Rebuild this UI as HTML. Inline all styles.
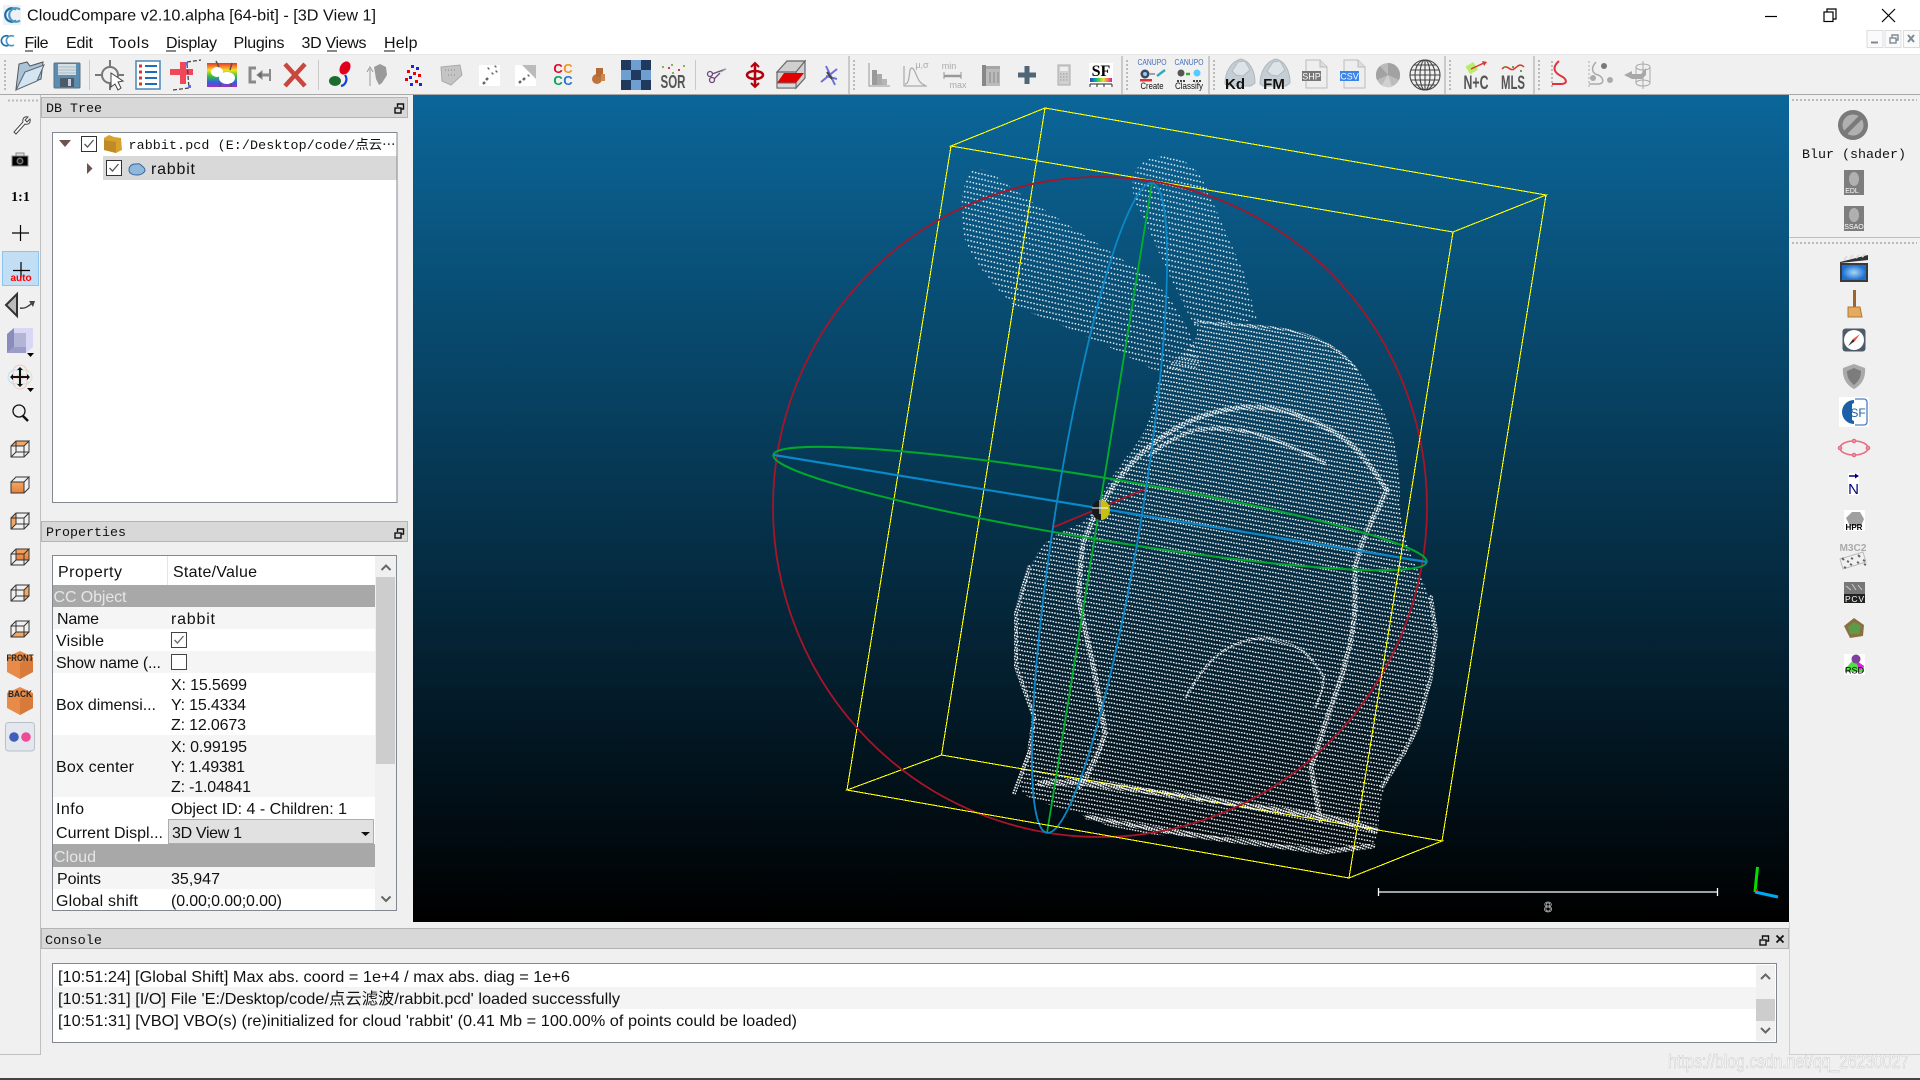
<!DOCTYPE html>
<html><head><meta charset="utf-8"><title>CloudCompare</title>
<style>
html,body{margin:0;padding:0;width:1920px;height:1080px;overflow:hidden;background:#f0f0f0}
svg{display:block}
text{font-family:"Liberation Sans","Noto Sans CJK SC",sans-serif;font-size:16px;fill:#111}
.m{font-family:"Liberation Mono","Noto Sans CJK SC",monospace;font-size:13.33px;fill:#111}
</style></head><body>
<svg xmlns="http://www.w3.org/2000/svg" width="1920" height="1080" viewBox="0 0 1920 1080">
<defs>
<linearGradient id="bg" x1="0" y1="0" x2="0" y2="1"><stop offset="0" stop-color="#0b6699"/><stop offset="1" stop-color="#000"/></linearGradient>
<linearGradient id="rb" x1="0" y1="0" x2="0" y2="1"><stop offset="0" stop-color="#ef3030"/><stop offset=".3" stop-color="#f4e020"/><stop offset=".55" stop-color="#30c040"/><stop offset=".8" stop-color="#3060e0"/><stop offset="1" stop-color="#a030c0"/></linearGradient>
<linearGradient id="rh" x1="0" y1="0" x2="1" y2="0"><stop offset="0" stop-color="#2040e0"/><stop offset=".35" stop-color="#20d060"/><stop offset=".6" stop-color="#f0e020"/><stop offset="1" stop-color="#f010a0"/></linearGradient>
<linearGradient id="ob" x1="0" y1="0" x2="0" y2="1"><stop offset="0" stop-color="#f2a765"/><stop offset="1" stop-color="#e8803a"/></linearGradient>
<radialGradient id="clap"><stop offset="0" stop-color="#a8d8f8"/><stop offset="1" stop-color="#1e6fd0"/></radialGradient>
<pattern id="ear" width="9.600" height="10.400" patternUnits="userSpaceOnUse" patternTransform="rotate(13)">
<rect x="0" y="0" width="1.400" height="1.400" fill="#fff"/><rect x="3.200" y=".2" width="1.400" height="1.400" fill="#fff"/><rect x="6.400" y="0" width="1.400" height="1.400" fill="#fff"/><rect x="1.300" y="5.200" width="1.400" height="1.400" fill="#fff"/><rect x="4.500" y="5.400" width="1.400" height="1.400" fill="#fff"/><rect x="7.700" y="5.200" width="1.400" height="1.400" fill="#fff"/></pattern>
<pattern id="body" width="8.400" height="8.600" patternUnits="userSpaceOnUse" patternTransform="rotate(11)">
<rect x="0" y="0" width="1.500" height="1.400" fill="#fff"/><rect x="2.800" y=".2" width="1.500" height="1.400" fill="#fff"/><rect x="5.600" y="0" width="1.500" height="1.400" fill="#fff"/><rect x="1" y="4.300" width="1.500" height="1.400" fill="#fff"/><rect x="3.800" y="4.500" width="1.500" height="1.400" fill="#fff"/><rect x="6.600" y="4.300" width="1.500" height="1.400" fill="#fff"/></pattern>
<pattern id="dense" width="2.500" height="2.800" patternUnits="userSpaceOnUse" patternTransform="rotate(20)"><rect width="1.700" height="1.700" fill="#fff"/></pattern>
</defs>

<!-- window chrome -->
<rect width="1920" height="1080" fill="#f0f0f0"/>
<rect width="1920" height="54" fill="#fff"/>
<rect y="54" width="1920" height="1" fill="#e6e6e6"/>
<rect y="94" width="1920" height="1" fill="#a8a8a8"/>
<rect y="1078" width="1920" height="2" fill="#444"/>

<rect x="3" y="5" width="18" height="20" fill="#eef1f3"/>
<g fill="none" stroke-width="2.200"><path d="M16 9.500A6.800 6.800 0 1 0 16 20.500" stroke="#1c6fa6"/><path d="M20 9.500A6.800 6.800 0 1 0 20 20.500" stroke="#4d97c6"/></g>
<text x="27" y="20.500" textLength="349" lengthAdjust="spacingAndGlyphs">CloudCompare v2.10.alpha [64-bit] - [3D View 1]</text>
<g fill="none" stroke-width="1.700"><path d="M9 36.500A5 5 0 1 0 9 45" stroke="#1c6fa6"/><path d="M14 36.500A5 5 0 1 0 14 45" stroke="#4d97c6"/></g>
<g>
<text x="24.500" y="48" textLength="24">File</text><text x="66" y="48" textLength="27">Edit</text><text x="109" y="48" textLength="40">Tools</text><text x="166" y="48" textLength="51">Display</text><text x="233.500" y="48" textLength="51">Plugins</text><text x="301.500" y="48" textLength="65">3D Views</text><text x="384" y="48" textLength="33.500">Help</text>
<path d="M25 51h8M166 51h10M327 51h10M384 51h11" stroke="#111" stroke-width="1"/>
</g>
<!-- window buttons -->
<path d="M1765 16.500h12" stroke="#000" stroke-width="1.200"/>
<g fill="none" stroke="#000" stroke-width="1.200"><rect x="1824" y="12" width="9" height="9.500"/><path d="M1827 12v-3h9v10h-3"/><path d="M1882 9l13 13M1895 9l-13 13"/></g>
<g fill="#fafafa" stroke="#dcdcdc"><rect x="1867" y="30.500" width="16" height="17"/><rect x="1885" y="30.500" width="16" height="17"/><rect x="1903.500" y="30.500" width="16" height="17"/></g>
<path d="M1871 42.500h7" stroke="#7d8a96" stroke-width="2"/>
<g fill="none" stroke="#7d8a96" stroke-width="1.400"><rect x="1890" y="38" width="6" height="5"/><path d="M1892 38v-3h6v5h-2"/></g>
<path d="M1908 35l6 7M1914 35l-6 7" stroke="#7d8a96" stroke-width="2"/>

<!-- toolbar grips & separators -->
<g stroke="#bbb" stroke-width="2" stroke-dasharray="2 2" fill="none"><path d="M5 60v30M854 60v30M1127 60v30M1214 60v30M1450 60v30M1539 60v30"/><path d="M8 100.500h31M1792 100h125M1792 243h125"/></g>
<g stroke="#bdbdbd" stroke-width="1.500"><path d="M849 56v38M1122 56v38M1209 56v38M1445 56v38M1534 56v38"/></g>
<g stroke="#c9c9c9"><path d="M89.500 60v30M318.500 60v30M695.500 60v30"/></g>

<!-- toolbar icons -->
<g transform="translate(30,75)"><path d="M-14 14L-11-11-3-13 0-9 13-13 11 4z" fill="#a9c4d8" stroke="#555"/><path d="M-14 15L-5-3 14-10 7 6z" fill="#d4e4f0" stroke="#5c6670"/></g>
<g transform="translate(67,75)"><rect x="-13" y="-12" width="26" height="25" rx="1" fill="#5b8db2" stroke="#5a6f80"/><rect x="-9" y="-11" width="18" height="11" fill="#d5dfe6"/><path d="M-9-8h18M-9-5h18M-9-2h18" stroke="#a9bbc8"/><rect x="-7" y="3" width="14" height="9" fill="#4a5a66"/><rect x="1" y="4" width="3" height="7" fill="#ccd"/></g>
<g transform="translate(110,75)" fill="none" stroke="#777" stroke-width="2"><circle r="8"/><path d="M0-15v6M0 9v6M-15 0h6M9 0h5"/><path d="M1-2l12 8-5 1 3 6-3 2-3-6-4 3z" fill="#fff" stroke="#444" stroke-width="1"/></g>
<g transform="translate(148,75)"><rect x="-12" y="-14" width="24" height="28" fill="#fff" stroke="#4a86b8" stroke-width="1.500"/><path d="M-3-9h12M-3-3h12M-3 3h12M-3 9h12" stroke="#1c6dbd" stroke-width="2"/><path d="M-9-9h3M-9-3h3M-9 3h3M-9 9h3" stroke="#d9342b" stroke-width="3"/></g>
<g transform="translate(184,75)"><path d="M-1-13v22M-14-3H9" stroke="#f0485a" stroke-width="6"/><path d="M3-13L17-15M3-11L5 13M-11 15L5 13" stroke="#444" stroke-width="1.300" stroke-dasharray="4 2" fill="none"/><rect x="1" y="-13" width="3" height="3" fill="#66f"/><rect x="4" y="10" width="3" height="3" fill="#66f"/></g>
<g transform="translate(222,75)"><rect x="-15" y="-12" width="30" height="24" fill="url(#rb)"/><ellipse cx="-5" cy="-3" rx="6" ry="5" fill="#fff"/><ellipse cx="5" cy="3" rx="8" ry="6" fill="#fff"/><path d="M-6-14l3 6M10-12l-2 7M-2 8v4M9 8v4" stroke="#555" stroke-width="1.500"/></g>
<g transform="translate(260,75)" fill="none" stroke="#8a8a8a" stroke-width="3"><path d="M-4-7h-6v14h6"/><path d="M10 0h-9"/><path d="M2-4l-5 4 5 4z" fill="#666" stroke-width="1"/><path d="M10-6v12" stroke-width="2"/></g>
<g transform="translate(295,75)"><path d="M-10-11L10 11M10-11L-10 11" stroke="#c8473f" stroke-width="4.500"/></g>
<g transform="translate(340,75)"><ellipse cx="5" cy="-7" rx="5" ry="7" transform="rotate(30 5 -7)" fill="#e0001c"/><ellipse cx="-5" cy="6" rx="6" ry="5" fill="#1d6c2e"/><path d="M5 0a7 7 0 0 1-4 11" fill="none" stroke="#1040e0" stroke-width="2.200"/></g>
<g transform="translate(377,75)" fill="#9a9a9a"><path d="M-7 11V-6M-10-3l3-5 3 5" stroke="#9a9a9a" fill="none"/><path d="M-3-8l6-3 6 3 1 8-5 8-3 2-3-6z"/></g>
<g transform="translate(413,75)"><g fill="#e00"><rect x="-6" y="-5" width="3" height="3"/><rect x="0" y="-3" width="3" height="3"/><rect x="-8" y="3" width="3" height="3"/><rect x="5" y="-1" width="3" height="3"/><rect x="2" y="5" width="3" height="3"/></g><g fill="#22d"><rect x="-2" y="-10" width="3" height="3"/><rect x="3" y="-8" width="3" height="3"/><rect x="-4" y="1" width="3" height="3"/><rect x="-3" y="8" width="3" height="3"/><rect x="6" y="8" width="3" height="3"/></g></g>
<g transform="translate(451,75)"><path d="M-10-8L9-10 11 0 0 10-9 6z" fill="#c4c4c4" stroke="#aaa"/><path d="M-6-5h12M-3 0h8" stroke="#888" stroke-dasharray="1 2"/></g>
<g transform="translate(489,75)"><rect x="-10" y="-10" width="21" height="21" fill="#fff"/><path d="M-6 9l2-2M-3 5l2-2M3-1l1-1M6-8l1-1M7-3l1-1M-1-6l1-1" stroke="#666" stroke-width="2.500"/></g>
<g transform="translate(525,75)"><rect x="-10" y="-10" width="21" height="21" fill="#fff"/><path d="M-3-10H11V4z" fill="#bbb"/><path d="M-6 8l2-2M-2 5l2-2M3 1l1-1" stroke="#666" stroke-width="2.500"/></g>
<g transform="translate(562,75)"><text x="-4" y="-2" style="font-size:13px;font-weight:bold;fill:#e2062c" text-anchor="middle">C</text><text x="6" y="-2" style="font-size:13px;font-weight:bold;fill:#f0961e" text-anchor="middle">C</text><text x="-4" y="10" style="font-size:13px;font-weight:bold;fill:#0c9d58" text-anchor="middle">C</text><text x="6" y="10" style="font-size:13px;font-weight:bold;fill:#2a6fd4" text-anchor="middle">C</text></g>
<g transform="translate(598,75)" fill="#c0723c"><circle cx="-1" cy="4" r="5"/><rect x="-2" y="-7" width="7" height="9" fill="#b56a34"/><rect x="3" y="-1" width="4" height="7" fill="#d08a50"/></g>
<g transform="translate(621,60)"><rect width="30" height="30" fill="#6f9fd0"/><path d="M0 0h10v10H0zM20 0h10v10H20zM10 10h10v10H10zM0 20h10v10H0zM20 20h10v10H20z" fill="#1f3a5c"/></g>
<g transform="translate(673,75)"><text x="0" y="13" text-anchor="middle" textLength="25" lengthAdjust="spacingAndGlyphs" style="font-size:18px;font-weight:bold;fill:#555">SOR</text><g fill="#8db04e"><rect x="-11" y="-9" width="2" height="2"/><rect x="-2" y="-11" width="2" height="2"/><rect x="10" y="-10" width="2" height="2"/><rect x="-1" y="-3" width="2" height="2"/></g><g fill="#d0402e"><rect x="-5" y="-8" width="2" height="2"/><rect x="5" y="-6" width="2" height="2"/></g></g>
<g transform="translate(717,75)" fill="none" stroke="#6a4a7a" stroke-width="1.300"><circle cx="-7" cy="-1" r="2.500"/><circle cx="-5" cy="5" r="2.500"/><path d="M-5-1L9-6M-3 4L3-2"/><path d="M4-3L9-6" stroke="#aaa"/></g>
<g transform="translate(755,75)" stroke="#b3000c" fill="none" stroke-width="2.500"><path d="M0-12V12"/><ellipse rx="8" ry="4"/><path d="M-4-8l4-4 4 4M-4 8l4 4 4-4" stroke-width="2"/></g>
<g transform="translate(791,75)"><path d="M-14-3L-4-14H14L5-3z M-14-3H5V13H-14z M5-3L14-14V3L5 13z" fill="#cfcfcf" stroke="#666" stroke-width="1.200"/><path d="M-14 8L-7-2H13L5 8z" fill="#e30000"/><path d="M-14 8H5V13H-14z" fill="#d8d8d8" stroke="#666"/></g>
<g transform="translate(829,75)" stroke="#6e6ed8" stroke-width="2" fill="none"><path d="M-3-9L6 10M-8 7L8-6M-3 1L8 4"/><path d="M-2-3L3 4" stroke="#444"/></g>
<g transform="translate(879,75)" fill="#9a9a9a"><rect x="-7" y="-5" width="5" height="15"/><rect x="-2" y="-1" width="5" height="11" fill="#aaa"/><rect x="3" y="4" width="5" height="6" fill="#b5b5b5"/><path d="M-10-12V11H11" stroke="#999" fill="none"/></g>
<g transform="translate(915,75)"><path d="M-11-9V11H12M-10 9C-4 9-7-8-3-7S2 9 10 10" stroke="#aaa" fill="none" stroke-width="1.200"/><text x="7" y="-7" text-anchor="middle" style="font-size:9px;fill:#aaa">μ,σ</text></g>
<g transform="translate(953,75)"><text x="-4" y="-6" text-anchor="middle" style="font-size:9px;fill:#aaa">min</text><text x="5" y="13" text-anchor="middle" style="font-size:9px;fill:#aaa">max</text><path d="M-9 1H8" stroke="#999" stroke-width="2.500"/><path d="M-9-3v7M8-3v7" stroke="#999"/></g>
<g transform="translate(991,75)" fill="#a5a5a5"><rect x="-9" y="-9" width="18" height="3"/><rect x="-9" y="-6" width="18" height="17" fill="#bbb"/><rect x="-9" y="-10" width="4" height="21" fill="#888"/><path d="M-1-3v11M3-3v11M7-3v11" stroke="#888"/></g>
<g transform="translate(1027,75)"><path d="M0-9V9M-9 0H9" stroke="#4e6675" stroke-width="5"/></g>
<g transform="translate(1064,75)"><rect x="-6" y="-10" width="12" height="20" fill="#d0d0d0" stroke="#aaa"/><rect x="-4" y="-8" width="8" height="4" fill="#eee"/><path d="M-4-1h8M-4 2h8M-4 5h8" stroke="#999" stroke-dasharray="1.500 1.500"/></g>
<g transform="translate(1089,63)"><rect width="24" height="24" fill="#fff"/><text x="12" y="13" text-anchor="middle" style="font-family:'Liberation Serif',serif;font-size:16px;font-weight:bold;fill:#000">SF</text><rect x="1" y="15" width="22" height="4" fill="url(#rh)"/><path d="M1 21h22M1 21v3M8 21v3M15 21v3M23 21v3" stroke="#222"/></g>
<g transform="translate(1152,75)"><text text-anchor="middle" y="-10" textLength="29" lengthAdjust="spacingAndGlyphs" style="font-size:8px;fill:#3f6cb8">CANUPO</text><circle cx="-7" cy="-1" r="4.500" fill="#445"/><circle cx="-7" cy="-1" r="2" fill="#8cf"/><path d="M-2-1h5" stroke="#456"/><path d="M5 1l8-6" stroke="#3ab" stroke-width="2.500"/><rect x="-12" y="4" width="12" height="2.500" fill="#d33"/><text text-anchor="middle" y="14" textLength="23" lengthAdjust="spacingAndGlyphs" style="font-size:9px;fill:#111">Create</text></g>
<g transform="translate(1189,75)"><text text-anchor="middle" y="-10" textLength="29" lengthAdjust="spacingAndGlyphs" style="font-size:8px;fill:#3f6cb8">CANUPO</text><circle cx="-8" cy="-2" r="3.500" fill="#555"/><path d="M-3-1h4" stroke="#3a3" stroke-width="2.500"/><circle cx="8" cy="-2" r="3.500" fill="#5cf"/><path d="M-12 6h9M4 6h9" stroke="#444" stroke-dasharray="2 1" stroke-width="2"/><text text-anchor="middle" y="14" textLength="28" lengthAdjust="spacingAndGlyphs" style="font-size:9px;fill:#111">Classify</text></g>
<g transform="translate(1240,75)"><path d="M-15 9C-15-4-8-14 1-16 10-14 15-4 15 8L11 11H-12z" fill="#c4ced4" stroke="#aeb8be"/><path d="M-8-4L-2-13 5-14 10-5 3 1-4 0zM-4 0L-8-4M3 1L10-5" fill="#dde4e8" stroke="#b0bac0"/><text x="-5" y="14" text-anchor="middle" style="font-size:15px;font-weight:bold;fill:#111">Kd</text></g>
<g transform="translate(1275,75)"><path d="M-15 9C-15-4-8-14 1-16 10-14 15-4 15 8L11 11H-12z" fill="#c4ced4" stroke="#aeb8be"/><path d="M-8-4L-2-13 5-14 10-5 3 1-4 0zM-4 0L-8-4M3 1L10-5" fill="#dde4e8" stroke="#b0bac0"/><text x="-1" y="14" text-anchor="middle" style="font-size:15px;font-weight:bold;fill:#111">FM</text></g>
<g transform="translate(1315,75)"><path d="M-9-15H5L12-8V13H-9z" fill="#eee" stroke="#bbb"/><path d="M5-15V-8H12" fill="#ddd" stroke="#bbb"/><rect x="-13" y="-4" width="19" height="10" fill="#777"/><text x="-3.500" y="4.500" text-anchor="middle" style="font-size:9px;fill:#fff">SHP</text></g>
<g transform="translate(1353,75)"><path d="M-9-15H5L12-8V13H-9z" fill="#eee" stroke="#bbb"/><path d="M5-15V-8H12" fill="#ddd" stroke="#bbb"/><rect x="-13" y="-4" width="19" height="10" fill="#3b84ea"/><text x="-3.500" y="4.500" text-anchor="middle" style="font-size:9px;fill:#fff">CSV</text></g>
<g transform="translate(1388,75)"><circle r="12" fill="#bcbcbc"/><path d="M0 0L0-12A12 12 0 0 1 11 5zM0 0L-11 5A12 12 0 0 1-8-9z" fill="#a2a2a2"/><path d="M0 0L4 12A12 12 0 0 1-6 10z" fill="#d0d0d0"/></g>
<g transform="translate(1425,75)" fill="none" stroke="#444" stroke-width="1.100"><circle r="15"/><ellipse rx="5" ry="15"/><ellipse rx="10" ry="15"/><path d="M0-15V15M-15 0H15M-14-5H14M-14 5H14M-11-10H11M-11 10H11"/></g>
<g transform="translate(1476,75)"><rect x="-9" y="-11" width="9" height="9" transform="rotate(-30 -5 -7)" fill="#b8ec68"/><path d="M-5-6L10-13" stroke="#d33" stroke-width="1.500"/><path d="M6-14L11-13 8-9z" fill="#d33"/><text text-anchor="middle" y="14" textLength="25" lengthAdjust="spacingAndGlyphs" style="font-size:19px;font-weight:bold;fill:#555">N+C</text></g>
<g transform="translate(1513,75)"><path d="M-11-6C-6-12-3-3 1-6S7-12 11-8" fill="none" stroke="#d33" stroke-width="1.500"/><g fill="#6a3"><rect x="-9" y="-9" width="2" height="2"/><rect x="-1" y="-9" width="2" height="2"/><rect x="7" y="-5" width="2" height="2"/></g><text text-anchor="middle" y="14" textLength="24" lengthAdjust="spacingAndGlyphs" style="font-size:19px;font-weight:bold;fill:#555">MLS</text></g>
<g transform="translate(1560,75)" fill="none"><path d="M-8-14V12" stroke="#888" stroke-dasharray="2 2"/><path d="M-1-14C-9-7-5-2 1 1S8 9 1 9H-8" stroke="#e0323c" stroke-width="2"/></g>
<g transform="translate(1601,75)" fill="none" stroke="#aaa"><path d="M-12-14V12" stroke-dasharray="2 2"/><path d="M-5-13C-12-5-7-1-3 0S5 8-2 9H-12" stroke-width="1.500"/><circle cx="3" cy="-9" r="3" fill="#777" stroke="none"/><circle cx="-8" cy="3" r="3" fill="#aaa" stroke="none"/><circle cx="9" cy="5" r="3" fill="#aaa" stroke="none"/></g>
<g transform="translate(1638,75)" fill="none" stroke="#aaa"><ellipse cx="5" cy="-8" rx="7" ry="3"/><path d="M-2-8V8M12-8V8"/><ellipse cx="5" cy="8" rx="7" ry="3"/><path d="M5-14V14"/><path d="M-6 4L-14 0-6-4V-1H3L8-7V0L4 4z" fill="#a8a8a8" stroke="none"/></g>

<!-- left toolbar -->
<rect x="40" y="95" width="1" height="959" fill="#c0c0c0"/>
<rect y="1054" width="41" height="1" fill="#c0c0c0"/>
<g transform="translate(20,125)"><path d="M-6 7L3-3C2-7 5-9 8-8L5-5 7-3 10-6C11-2 8 0 5-1L-4 9z" fill="#fff" stroke="#444"/></g>
<g transform="translate(20,161)"><rect x="-8" y="-5" width="16" height="10" fill="#000" stroke="#888"/><rect x="-4" y="-8" width="8" height="3" fill="#ddd" stroke="#888"/><circle r="3.500" fill="#777"/><circle r="2" fill="#222"/></g>
<text x="20.500" y="201" text-anchor="middle" style="font-family:'Liberation Serif',serif;font-size:14px;font-weight:bold;fill:#000">1:1</text>
<path d="M20.500 225v16M12 233h17" stroke="#000" stroke-width="1.200"/>
<rect x="2.500" y="251.500" width="36" height="34" fill="#c2def4" stroke="#8ac4f0"/>
<path d="M21 262v16M13 270.500h17" stroke="#000" stroke-width="1.200"/>
<text x="21" y="281" text-anchor="middle" style="font-size:10px;font-weight:bold;fill:#f00">auto</text>
<g transform="translate(20,305)"><path d="M-14 0L-3-11V11z" fill="#bbb" stroke="#333" stroke-width="2"/><path d="M0 3C4 4 8 2 12-2" fill="none" stroke="#444" stroke-width="1.500"/><path d="M9-4L15-4 13 2z" fill="#444"/></g>
<g transform="translate(20,342)"><path d="M-13-8L-6-14H13V5L6 11H-13z" fill="#d8d8f6"/><path d="M-13-8L-6-14V5L-13 11z" fill="#8c8cbc"/><rect x="-6" y="-9" width="12" height="14" fill="#b4b4d4"/><path d="M-13 11L-6 5H6L6 11z" fill="#9c9cc8"/><path d="M7 11h7l-3.500 4z" fill="#000"/></g>
<g transform="translate(20,377)"><circle cx="-5" r="7" fill="none" stroke="#b8e0f4"/><circle cx="5" r="7" fill="none" stroke="#c8eac8"/><circle cy="-5" r="7" fill="none" stroke="#f4c8c8"/><circle cy="5" r="7" fill="none" stroke="#f4c8c8"/><path d="M0-9V9M-9 0H9" stroke="#111" stroke-width="2"/><path d="M-3-7L0-10 3-7zM-3 7L0 10 3 7zM-7-3L-10 0-7 3zM7-3L10 0 7 3z" fill="#111"/><path d="M7 11h7l-3.500 4z" fill="#000"/></g>
<g transform="translate(20,413)" fill="none" stroke="#111"><circle cx="-1" cy="-2" r="6" stroke-width="1.300"/><path d="M3 3L8 8" stroke-width="2.500"/></g>
<g fill="none" stroke="#333">
<g transform="translate(20,449)"><path d="M-9-3L-4-8H9L4-3z" fill="#f2a765" stroke="none"/><path d="M-9-3H4V8H-9zM4-3L9-8V3L4 8M-9-3L-4-8H9M-4-8V3H9M-9 8L-4 3"/></g>
<g transform="translate(20,485)"><rect x="-9" y="-3" width="13" height="11" fill="url(#ob)" stroke="none"/><path d="M-9-3H4V8H-9zM4-3L9-8V3L4 8M-9-3L-4-8H9"/></g>
<g transform="translate(20,521)"><path d="M-9-3L-4-8V3L-9 8z" fill="#f2a765" stroke="none"/><path d="M-9-3H4V8H-9zM4-3L9-8V3L4 8M-9-3L-4-8H9M-4-8V3H9M-9 8L-4 3"/></g>
<g transform="translate(20,557)"><rect x="-4" y="-8" width="13" height="11" fill="url(#ob)" stroke="none"/><path d="M-9-3H4V8H-9zM4-3L9-8V3L4 8M-9-3L-4-8H9M-4-8V3H9M-9 8L-4 3"/></g>
<g transform="translate(20,593)"><path d="M4-3L9-8V3L4 8z" fill="#f2a765" stroke="none"/><path d="M-9-3H4V8H-9zM4-3L9-8V3L4 8M-9-3L-4-8H9M-4-8V3H9M-9 8L-4 3"/></g>
<g transform="translate(20,629)"><path d="M-9 8L-4 3H9L4 8z" fill="#f2a765" stroke="none"/><path d="M-9-3H4V8H-9zM4-3L9-8V3L4 8M-9-3L-4-8H9M-4-8V3H9M-9 8L-4 3"/></g>
</g>
<g transform="translate(20,665)"><path d="M-13-8L0-14 13-8V7L0 14-13 7z" fill="#e88a48"/><path d="M0-2L13-8V7L0 14z" fill="#d87a3a"/><text y="-4" text-anchor="middle" textLength="27" lengthAdjust="spacingAndGlyphs" style="font-size:9px;font-weight:bold;fill:#222">FRONT</text></g>
<g transform="translate(20,701)"><path d="M-13-8L0-14 13-8V7L0 14-13 7z" fill="#e88a48"/><path d="M0-2L13-8V7L0 14z" fill="#d87a3a"/><text y="-4" text-anchor="middle" textLength="24" lengthAdjust="spacingAndGlyphs" style="font-size:9px;font-weight:bold;fill:#222">BACK</text></g>
<rect x="5.500" y="722.500" width="29" height="28.500" rx="3" fill="#e4e8ee" stroke="#b8c0c8"/>
<circle cx="14" cy="737" r="4.800" fill="#3f5fb8"/><circle cx="26" cy="737" r="4.800" fill="#ee4c96"/>

<!-- DB tree panel -->
<rect x="41.500" y="97.500" width="366" height="20" fill="#d8d8d8" stroke="#b4b4b4"/>
<text class="m" x="46" y="112">DB Tree</text>
<g fill="none" stroke="#111" stroke-width="1.400"><rect x="395" y="108" width="6" height="5"/><path d="M397.500 107v-3h6v5h-2"/></g>
<rect x="52.500" y="132.500" width="344.500" height="370" fill="#fff" stroke="#828790"/>
<rect x="103" y="156" width="293.500" height="24" fill="#d9d9d9"/>
<path d="M59 140h12l-6 7z" fill="#6b5350"/>
<path d="M87 163l5.500 5.500-5.500 5.500z" fill="#6b5350"/>
<rect x="81.500" y="136.500" width="15" height="15" fill="#fff" stroke="#333"/><path d="M84.500 144l3 3 6-7" fill="none" stroke="#555" stroke-width="1.300"/>
<rect x="106.500" y="160.500" width="15" height="15" fill="#fff" stroke="#333"/><path d="M109.500 168l3 3 6-7" fill="none" stroke="#555" stroke-width="1.300"/>
<path d="M104 138l5-3 5 2 7 1 1 12-6 3-12-3z" fill="#d9a22e"/><path d="M104 140l12 2v11l-12-3z" fill="#c08a24"/>
<path d="M129 170c0-4 3-6 6-6s4-1 6 1 4 3 4 5-3 5-8 5-8-2-8-5z" fill="#8fb8dc" stroke="#33689c"/>
<text class="m" x="128.500" y="149" textLength="267" lengthAdjust="spacing">rabbit.pcd (E:/Desktop/code/点云⋯</text>
<text x="151" y="174" textLength="44">rabbit</text>

<!-- Properties -->
<rect x="41.500" y="521.500" width="366" height="20" fill="#d8d8d8" stroke="#b4b4b4"/>
<text class="m" x="46" y="536">Properties</text>
<g fill="none" stroke="#111" stroke-width="1.400"><rect x="395" y="533" width="6" height="5"/><path d="M397.500 532v-3h6v5h-2"/></g>
<rect x="52.500" y="555.500" width="344" height="355" fill="#fff" stroke="#828790"/>
<rect x="167" y="556" width="1" height="29" fill="#e5e5e5"/>
<g fill="#f5f5f5"><rect x="53" y="607" width="322" height="22"/><rect x="53" y="651" width="322" height="22"/><rect x="53" y="735" width="322" height="62"/><rect x="53" y="867" width="322" height="22"/></g>
<g fill="#a8a8a8"><rect x="53" y="585" width="322" height="22"/><rect x="53" y="844" width="322" height="23"/></g>
<rect x="168.500" y="819.500" width="205" height="24" fill="#e1e1e1" stroke="#adadad"/>
<path d="M361 832h9l-4.500 4z" fill="#111"/>
<rect x="375" y="556" width="21" height="354" fill="#f0f0f0"/><rect x="376" y="577" width="19" height="187" fill="#cdcdcd"/>
<path d="M381.500 570l4.500-4.500 4.500 4.500M381.500 896.500l4.500 4.500 4.500-4.500" fill="none" stroke="#666" stroke-width="2"/>
<g>
<text x="58" y="577" textLength="64">Property</text><text x="173" y="577" textLength="84">State/Value</text>
<text x="53.500" y="602" textLength="73" style="fill:#e6e6e6">CC Object</text>
<text x="57" y="624" textLength="42">Name</text><text x="171" y="624" textLength="44">rabbit</text>
<text x="56" y="646" textLength="48">Visible</text>
<text x="56" y="668" textLength="105">Show name (...</text>
<text x="56" y="710" textLength="100">Box dimensi...</text>
<text x="171" y="690" textLength="76">X: 15.5699</text><text x="171" y="710" textLength="75">Y: 15.4334</text><text x="171" y="730" textLength="75">Z: 12.0673</text>
<text x="56" y="772" textLength="78">Box center</text>
<text x="171" y="752" textLength="76">X: 0.99195</text><text x="171" y="772" textLength="74">Y: 1.49381</text><text x="171" y="792" textLength="80">Z: -1.04841</text>
<text x="56" y="814" textLength="28">Info</text><text x="171" y="814" textLength="176">Object ID: 4 - Children: 1</text>
<text x="56" y="838" textLength="107">Current Displ...</text><text x="172" y="838" textLength="70">3D View 1</text>
<text x="54" y="862" textLength="42" style="fill:#e6e6e6">Cloud</text>
<text x="57" y="884" textLength="44">Points</text><text x="171" y="884" textLength="49">35,947</text>
<text x="56" y="906" textLength="82">Global shift</text><text x="171" y="906" textLength="111">(0.00;0.00;0.00)</text>
</g>
<rect x="171.500" y="632.500" width="15" height="15" fill="#fff" stroke="#444"/><path d="M174.500 640l3 3 6-7" fill="none" stroke="#666" stroke-width="1.300"/>
<rect x="171.500" y="654.500" width="15" height="15" fill="#fff" stroke="#444"/>

<!-- 3D view -->
<rect x="413" y="95" width="1376" height="827" fill="url(#bg)"/>
<svg x="413" y="95" width="1376" height="827" viewBox="413 95 1376 827">
<!-- back edges -->
<g fill="none" stroke="#ff0" stroke-width="1.100" shape-rendering="crispEdges">
<path d="M1045 108L951 146L1453 232L1546 195ZM847 790L941.500 755L1442 841L1349 878ZM1045 108L941.500 755M951 146L847 790M1546 195L1442 841M1453 232L1349 878"/>
</g>
<!-- rabbit -->
<path d="M970 172Q976 166 990 172L1029 200L1150 277Q1190 315 1200 367L1159 373Q1090 335 1016 307Q980 275 965 240Q955 200 970 172Z" fill="url(#ear)"/>
<path d="M1134 175Q1140 156 1168 156Q1195 160 1206 187L1244 273L1257 320L1195 327Q1170 280 1146 223Q1128 195 1134 175Z" fill="url(#ear)"/>
<path d="M1197 331Q1195 322 1244 325Q1293 328 1317.500 339Q1342 350 1357.500 370Q1373 390 1382 408.500Q1391 427 1395.500 447Q1400 467 1400 500Q1400 533 1415.500 565Q1431 597 1433.500 615Q1436 633 1433.500 655Q1431 677 1424.500 702Q1418 727 1411 740Q1404 753 1393 770Q1382 787 1380 810Q1378 833 1375.500 840Q1373 847 1348.500 849.500Q1324 852 1290.500 847.500Q1257 843 1234.500 840.500Q1212 838 1167.500 835.500Q1123 833 1101 823Q1079 813 1067.500 810Q1056 807 1035 800Q1014 793 1021.500 773Q1029 753 1031.500 735Q1034 717 1025 692Q1016 667 1016 640Q1016 613 1022.500 590Q1029 567 1038 552Q1047 537 1069.500 528.500Q1092 520 1101 498.500Q1110 477 1128 455Q1146 433 1150 416.500Q1154 400 1156.500 386.500Q1159 373 1179 356.500Q1199 340 1197 331Z" fill="url(#body)"/>
<g fill="none" stroke="url(#dense)" stroke-linecap="round">
<path d="M1096 513Q1112 485 1132 463Q1155 438 1186 423Q1215 409 1248 407Q1277 407 1302 417Q1326 426 1346 440Q1362 454 1373 470L1387 490" stroke-width="5"/>
<path d="M1150 455Q1170 438 1195 430Q1232 425 1266 437Q1298 448 1324 463" stroke-width="4"/>
<path d="M1387 490Q1375 515 1372 520Q1360 545 1355 567L1355 610Q1352 640 1346 660Q1338 690 1329 713L1311 767L1320 820" stroke-width="5"/>
<path d="M1096 513Q1088 530 1083 543Q1079 575 1079 600Q1085 630 1092 660Q1100 700 1105 733Q1095 765 1079 787" stroke-width="5"/>
<path d="M1186 697Q1198 675 1212 660Q1225 648 1239 643Q1255 637 1270 639Q1287 642 1302 650Q1315 662 1324 677Q1322 695 1315 707" stroke-width="2.500"/>
<path d="M1040 783L1079 782L1190 797L1324 817L1376 830" stroke-width="6"/>
<path d="M1087 817L1159 830L1212 838L1324 852L1373 846" stroke-width="5"/>
<path d="M1195 322L1244 325Q1293 328 1317 339Q1342 350 1357 370" stroke-width="2.500"/>
<path d="M1029 567L1016 613L1016 667L1034 717L1029 753L1014 793" stroke-width="4"/>
<path d="M1431 597L1436 633L1431 677L1418 727L1404 753L1382 787" stroke-width="4"/>
</g>
<!-- sphere circles -->
<g fill="none">
<ellipse cx="1100" cy="507" rx="327" ry="330" stroke="#a81428" stroke-width="1.800"/>
<path d="M1054 527L1148 488" stroke="#a81428" stroke-width="1.800"/>
<ellipse cx="1100" cy="508.500" rx="331" ry="31" transform="rotate(9.300 1100 508.500)" stroke="#00a82c" stroke-width="2"/>
<path d="M774 455L1427 562" stroke="#0a88c8" stroke-width="2.200"/>
<path d="M1152 183L1047 833" stroke="#00b02c" stroke-width="1.800"/>
<ellipse cx="1099.500" cy="508" rx="43" ry="329" transform="rotate(9.200 1099.500 508)" stroke="#0a88c8" stroke-width="1.800"/>
</g>
<ellipse cx="1101" cy="510" rx="9" ry="10" fill="#181818"/><path d="M1101 500a9 10 0 0 1 0 20z" fill="#c8c010"/><path d="M1092 508h16M1100 500v14" stroke="#fff" stroke-width="1"/>
<!-- front yellow edges over rabbit -->
<path d="M847 790L1349 878M1349 878L1453 232" stroke="#ff0" stroke-width="1.100" fill="none" shape-rendering="crispEdges"/>
<!-- scale & trihedron -->
<path d="M1378 892H1718M1378.500 888v8M1717.500 888v8" stroke="#fff" stroke-width="1.300"/>
<text x="1548" y="912" text-anchor="middle" style="font-size:15px;fill:none;stroke:#fff;stroke-width:.5">8</text>
<path d="M1755 892L1757.500 867" stroke="#00e000" stroke-width="3"/>
<path d="M1755 892L1778 897" stroke="#00a8f0" stroke-width="3"/>
<rect x="1756" y="889" width="2" height="2" fill="#e00"/>
</svg>

<!-- right panel -->
<rect x="1789" y="922" width="131" height="132" fill="#f0f0f0"/>
<path d="M1789 1054.500H1920M1789.500 922V1054" stroke="#d0d0d0" fill="none"/>
<g transform="translate(1853,125)"><ellipse rx="15" ry="15" fill="#7a7a7a"/><ellipse rx="10.500" ry="10.500" fill="#b0b0b0"/><path d="M-8 8L8-8" stroke="#7a7a7a" stroke-width="4.500"/></g>
<text class="m" x="1802" y="158" textLength="104">Blur (shader)</text>
<g transform="translate(1844,170)"><rect width="20" height="25" fill="#7d7d7d"/><ellipse cx="10" cy="9" rx="5" ry="7" fill="#b0b0b0"/><text x="8" y="23" text-anchor="middle" style="font-size:7px;fill:#fff">EDL</text></g>
<g transform="translate(1844,206)"><rect width="20" height="25" fill="#7d7d7d"/><ellipse cx="10" cy="9" rx="5" ry="7" fill="#b0b0b0"/><text x="10" y="23" text-anchor="middle" style="font-size:7px;fill:#fff">SSAO</text></g>
<rect x="1789" y="237" width="131" height="1" fill="#bdbdbd"/>
<g transform="translate(1854,268)"><rect x="-14" y="-5" width="28" height="19" fill="#3a3a3a"/><rect x="-12" y="-3" width="24" height="15" fill="url(#clap)"/><path d="M-14-6L14-13V-8L-14-5z" fill="#333"/><path d="M-10-8l3-4M-4-9l3-4M2-10l3-3M8-11l3-3" stroke="#ddd" stroke-width="2"/></g>
<g transform="translate(1854,305)"><path d="M-1-15h3V2h-3z" fill="#a0632c"/><path d="M-6 2H6L8 12H-6z" fill="#e4aa60" stroke="#b07a30"/></g>
<g transform="translate(1854,340)"><rect x="-11.500" y="-11.500" width="23" height="23" rx="3" fill="#4d5a68"/><circle r="10" fill="#fff"/><path d="M-6 6L-1-1 1 1z" fill="#333"/><path d="M6-6L1 1-1-1z" fill="#f05040"/></g>
<g transform="translate(1854,376)"><path d="M0-12L11-8C12 1 8 9 0 13-8 9-12 1-11-8z" fill="#aaa"/><path d="M0-8L7-5C7 1 5 5 0 9-5 5-7 1-7-5z" fill="#7c7c7c"/></g>
<g transform="translate(1839,397)"><rect width="30" height="30" fill="#fff"/><path d="M16 2H25A3 3 0 0 1 28 5V25A3 3 0 0 1 25 28H16" fill="none" stroke="#4a7ec0" stroke-width="1.300"/><path d="M15 3A12 12 0 0 0 15 27V24L13 23V7L15 6Z" fill="#1b5fa8"/><path d="M16 3A12 12 0 1 1 16 27" fill="none"/><text x="19" y="20" text-anchor="middle" style="font-size:12px;fill:#1b5fa8">SF</text></g>
<g transform="translate(1854,448)" fill="#f8d0d4" stroke="#e86a80" stroke-width="1.600"><ellipse rx="14" ry="7" fill="none"/><circle cx="-14" r="1.500"/><circle cx="14" r="1.500"/><circle cy="-7" r="1.500"/><circle cy="7" r="1.500"/></g>
<g transform="translate(1848,473)"><rect width="11" height="22" fill="#fff"/><path d="M1 3H8" stroke="#00007f" stroke-width="1.500"/><path d="M7 0.500L11 3 7 5.500z" fill="#00007f"/><text x="5.500" y="21" text-anchor="middle" style="font-size:15px;fill:#00007f">N</text></g>
<g transform="translate(1844,510)"><rect width="21" height="21" fill="#fff"/><path d="M2 8L8 2H16L20 9 17 16H6z" fill="#a0a0a0"/><text x="10" y="20" text-anchor="middle" style="font-size:8px;font-weight:bold;fill:#000">HPR</text></g>
<g transform="translate(1853,556)"><text y="-5" text-anchor="middle" textLength="27" lengthAdjust="spacingAndGlyphs" style="font-size:10px;font-weight:bold;fill:#aaa">M3C2</text><path d="M-13 3L10-4 13 6-10 13z" fill="none" stroke="#bbb"/><path d="M-11 2l2 2M-6 5l2 1M-2 2l2 1M5-1l2 2M10 4l2 1M-9 11l2 1M-3 8l2 1M4 6l2 1M11 8l2 1" stroke="#666" stroke-width="2"/></g>
<g transform="translate(1844,582)"><rect width="21" height="21" fill="#777"/><path d="M2 4l5 4M8 2l4 6M14 3l4 5" stroke="#ccc"/><rect y="12" width="21" height="9" fill="#222"/><text x="10.500" y="20" text-anchor="middle" textLength="19" style="font-size:8.500px;fill:#fff">PCV</text></g>
<g transform="translate(1854,628)"><path d="M-10-2L0-10 10-3 9 8-4 10z" fill="#8a7040"/><path d="M-6-1L0-6 7-2 5 6-4 6z" fill="#5f9a48"/></g>
<g transform="translate(1844,654)"><rect width="21" height="21" fill="#fff"/><path d="M1 15L10 5 20 12v6H1z" fill="#50e040"/><path d="M10 5L20 12 16 16z" fill="#e020e0"/><circle cx="12" cy="5" r="4.500" fill="#8040a0"/><text x="10.500" y="19.500" text-anchor="middle" textLength="19" style="font-size:9px;fill:#000">RSD</text></g>

<!-- Console -->
<rect x="41.500" y="928.500" width="1747" height="20" fill="#d8d8d8" stroke="#b4b4b4"/>
<text class="m" x="45" y="944" textLength="57" lengthAdjust="spacingAndGlyphs">Console</text>
<g fill="none" stroke="#111" stroke-width="1.400"><rect x="1760" y="940" width="6" height="5"/><path d="M1762.500 939v-3h6v5h-2"/><path d="M1776.500 935.500l7 7M1783.500 935.500l-7 7" stroke-width="1.800"/></g>
<rect x="52.500" y="963.500" width="1724" height="79" fill="#fff" stroke="#828790"/>
<rect x="54" y="987" width="1702" height="22" fill="#f4f4f4"/>
<rect x="1756" y="965" width="19" height="76" fill="#f0f0f0"/><rect x="1756" y="999" width="19" height="22" fill="#cdcdcd"/>
<path d="M1761 979l4.500-4.500 4.500 4.500M1761 1028l4.500 4.500 4.500-4.500" fill="none" stroke="#666" stroke-width="2"/>
<text x="58" y="982" textLength="512" lengthAdjust="spacingAndGlyphs">[10:51:24] [Global Shift] Max abs. coord = 1e+4 / max abs. diag = 1e+6</text>
<text x="58" y="1004" textLength="562" lengthAdjust="spacingAndGlyphs">[10:51:31] [I/O] File 'E:/Desktop/code/点云滤波/rabbit.pcd' loaded successfully</text>
<text x="58" y="1026" textLength="739" lengthAdjust="spacingAndGlyphs">[10:51:31] [VBO] VBO(s) (re)initialized for cloud 'rabbit' (0.41 Mb = 100.00% of points could be loaded)</text>
<text x="1668" y="1068" textLength="241" lengthAdjust="spacingAndGlyphs" style="font-size:19px;fill:#f9f9f9;stroke:#c8c8c8;stroke-width:.5">https://blog.csdn.net/qq_26230027</text>
</svg>
</body></html>
